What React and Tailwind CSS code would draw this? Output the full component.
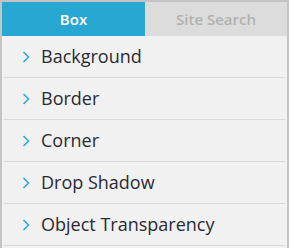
export default function App() {
  const items = ["Background", "Border", "Corner", "Drop Shadow", "Object Transparency"];
  return (
    <div className="w-[290px] h-[248px] bg-white" style={{ fontFamily: "'Open Sans', Lato, sans-serif" }}>
      <div className="w-[289px] h-[248px] border-t-2 border-l-2 border-r-2 border-[#c4c4c4] bg-[#f1f1f1] flex flex-col">
        <div className="flex h-[34px] shrink-0">
          <div className="w-[143px] bg-[#29a7d3] text-white text-[15px] font-semibold flex items-center justify-center">Box</div>
          <div className="flex-1 bg-[#dcdcdc] text-[#b1b1b1] text-[15px] font-semibold flex items-center justify-center">Site Search</div>
        </div>
        <div className="flex flex-col px-[2px]">
          {items.map((t) => (
            <div key={t} className="h-[42px] border-b border-[#dadada] flex items-center">
              <svg width="8" height="12" viewBox="0 0 8 12" className="ml-[18px] mr-[11px]">
                <path d="M1.5 1 L6.5 6 L1.5 11" fill="none" stroke="#2fa9d6" strokeWidth="1.6" />
              </svg>
              <span className="text-[18px] text-[#2a2a33]">{t}</span>
            </div>
          ))}
        </div>
      </div>
    </div>
  );
}
